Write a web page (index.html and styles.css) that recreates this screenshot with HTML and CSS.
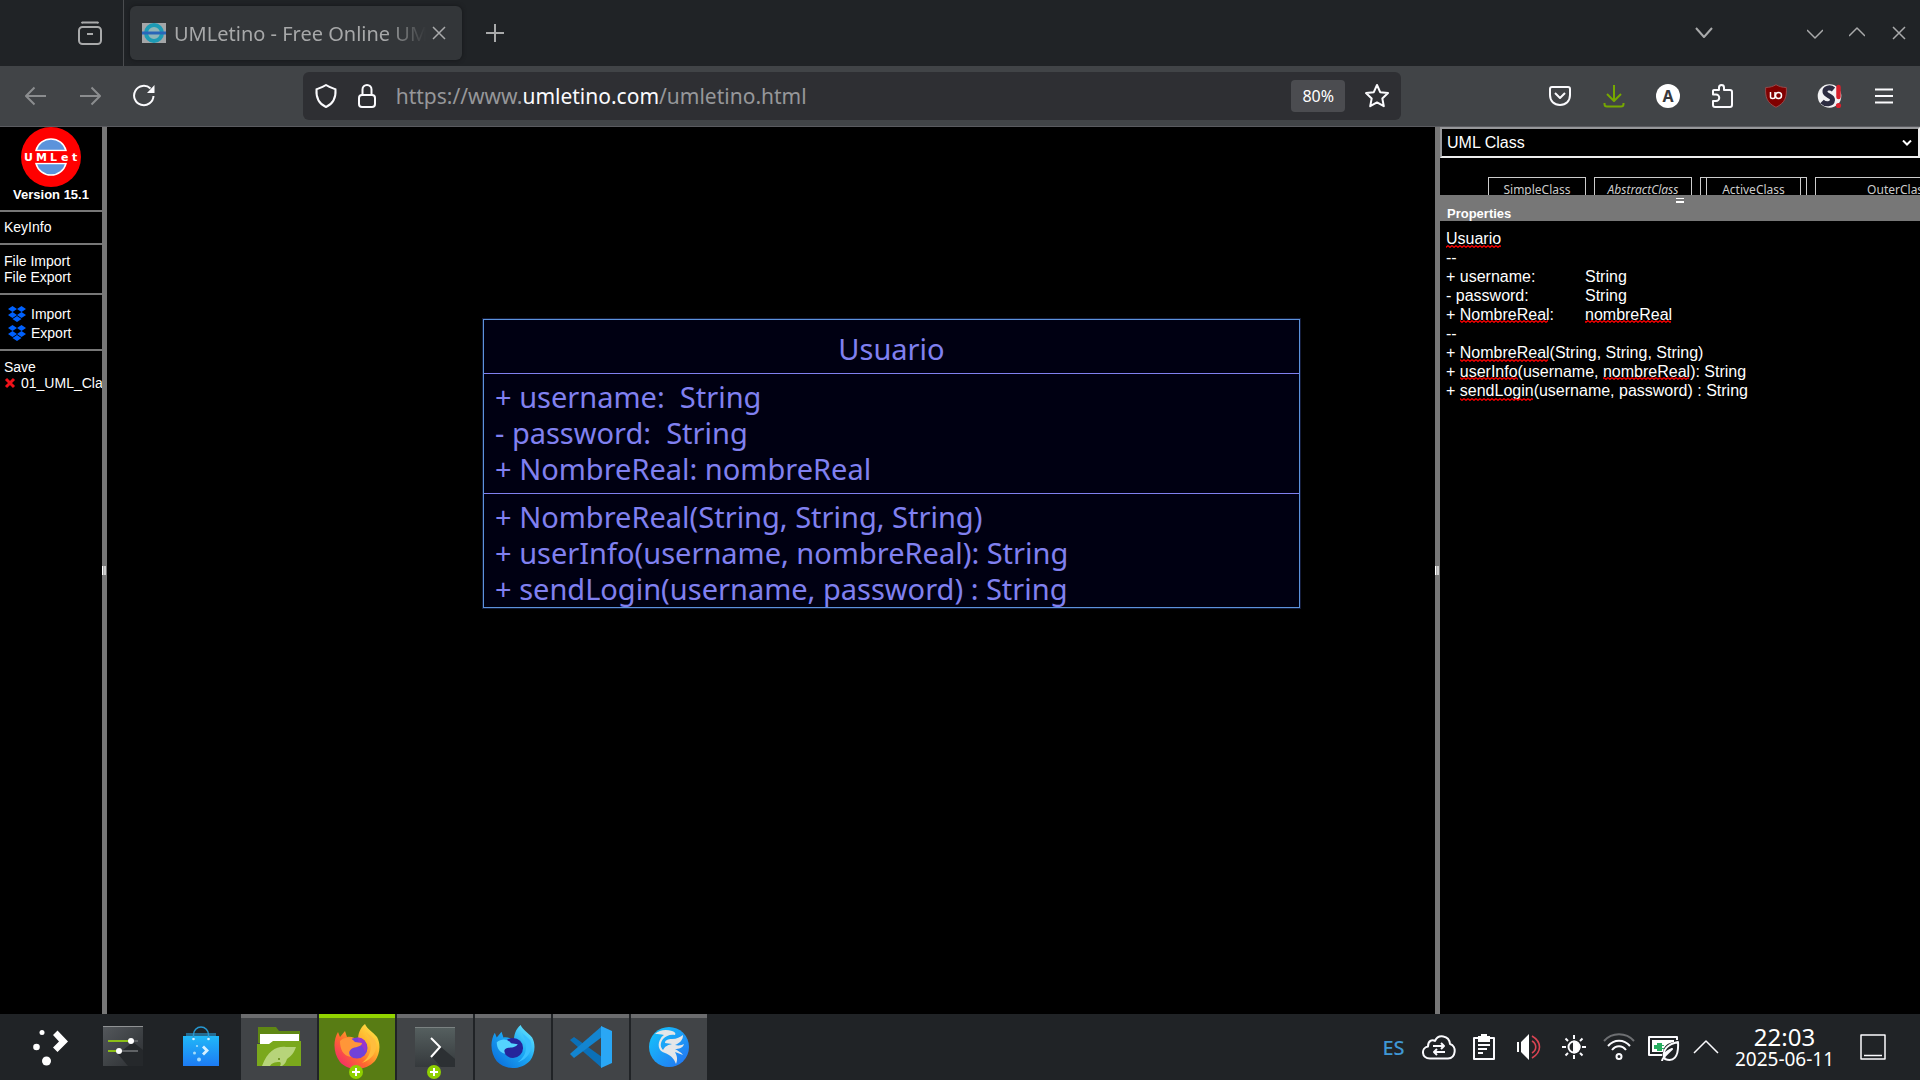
FILE: index.html
```html
<!DOCTYPE html>
<html lang="es">
<head>
<meta charset="utf-8">
<title>UMLetino - Free Online UML Tool</title>
<link rel="stylesheet" href="styles.css">
</head>
<body>
<div class="desktop">
  <header class="tabbar">
    <div class="tabbar-start">
      <button class="icon-btn" aria-label="Firefox View"><svg width="24" height="24" viewBox="0 0 24 24" class="line dim"><path d="M4 1.5h16M3.5 2.2l.8-.7h15.4l.8.7" /><rect x="1" y="6" width="22" height="17" rx="3.500"/><path d="M9 13h6"/></svg></button>
    </div>
    <div class="tab">
      <svg class="favicon" width="24" height="22" viewBox="0 0 24 22"><path fill="#a4a6a8" d="M0 1h24v20H0z"/><circle cx="12" cy="11" r="8" fill="#8fb5b8" stroke="#1d9bb5" stroke-width="4"/><path stroke="#2a66b8" stroke-width="3" d="M0 11h24"/></svg>
      <span class="tab-title">UMLetino - Free Online UML Tool</span>
      <button class="tab-close" aria-label="Close tab"><svg width="14" height="14" viewBox="0 0 14 14" class="line dim thin"><path d="M1 1l12 12M13 1L1 13"/></svg></button>
    </div>
    <button class="icon-btn" aria-label="New tab"><svg width="18" height="18" viewBox="0 0 18 18" class="line dim"><path d="M9 0v18M0 9h18"/></svg></button>
    <div class="grow"></div>
    <button class="icon-btn list-tabs" aria-label="List all tabs"><svg width="18" height="12" viewBox="0 0 18 12" class="line dim"><path d="M1 1l8 9 8-9"/></svg></button>
    <div class="window-controls">
      <button aria-label="Minimize"><svg width="16" height="16" viewBox="0 0 16 16" class="line dim thin"><path d="M0 5l8 8 8-8"/></svg></button>
      <button aria-label="Maximize"><svg width="16" height="16" viewBox="0 0 16 16" class="line dim thin"><path d="M0 11l8-8 8 8"/></svg></button>
      <button aria-label="Close"><svg width="14" height="14" viewBox="0 0 14 14" class="line dim thin"><path d="M1 1l12 12M13 1L1 13"/></svg></button>
    </div>
  </header>

  <nav class="toolbar">
    <button class="icon-btn" aria-label="Back"><svg width="22" height="20" viewBox="0 0 22 20" class="line faint"><path d="M21 10H1M9.500 1.500L1 10l8.500 8.500"/></svg></button>
    <button class="icon-btn" aria-label="Forward"><svg width="22" height="20" viewBox="0 0 22 20" class="line faint"><path d="M1 10h20M12.500 1.500L21 10l-8.500 8.500"/></svg></button>
    <button class="icon-btn" aria-label="Reload"><svg width="24" height="24" viewBox="0 0 24 24" class="line"><path d="M21.500 12a9.700 9.700 0 1 1-3-7.500"/><path fill="#fbfbfe" stroke="none" d="M22.500 1v8h-7.500z"/></svg></button>
    <div class="spacer"></div>
    <div class="urlbar">
      <svg width="24" height="26" viewBox="0 0 24 26" class="line"><path d="M12 2c3 2 6 3 9.500 4.300C22 14 20 20.500 12 24 4 20.500 2 14 2.500 6.300 6 5 9 4 12 2z"/></svg>
      <svg width="20" height="26" viewBox="0 0 20 26" class="line"><rect x="2" y="12" width="16" height="12" rx="3"/><path d="M5.500 12V6.500a4.500 4.500 0 0 1 9 0V12"/></svg>
      <a class="url" href="#url">https://www.<b>umletino.com</b>/umletino.html</a>
      <button class="zoom">80%</button>
      <button class="star" aria-label="Bookmark"><svg width="26" height="26" viewBox="0 0 26 26" class="line"><path d="M13 2l3.200 7.200 7.800.9-5.700 5.300 1.500 7.800L13 19.400l-6.800 3.800 1.500-7.800L2 10.100l7.800-.9z"/></svg></button>
    </div>
    <div class="spacer"></div>
    <button class="icon-btn" aria-label="Pocket"><svg width="24" height="24" viewBox="0 0 24 24" class="line"><path d="M4 3h16c1.400 0 2 .8 2 2v6c0 6-4 10-10 10S2 17 2 11V5c0-1.200.6-2 2-2z"/><path d="M7 9l5 5 5-5"/></svg></button>
    <button class="icon-btn" aria-label="Downloads"><svg width="22" height="24" viewBox="0 0 22 24" class="line green"><path d="M11 1v15M4 10l7 7 7-7M1.500 19v1c0 1.500 1 2.500 2.500 2.500h14c1.500 0 2.500-1 2.500-2.500v-1"/></svg></button>
    <button class="icon-btn" aria-label="Account"><span class="avatar">A</span></button>
    <button class="icon-btn" aria-label="Extensions"><svg width="24" height="26" viewBox="0 0 24 26" class="line"><path d="M4 7h5V4.500a2.500 2.500 0 0 1 5 0V7h6c1 0 2 1 2 2v13c0 1-1 2-2 2H5c-1.500 0-2-1-2-2v-4h3a2.500 2.500 0 0 0 0-6.500H3V8c0-.6.400-1 1-1z"/></svg></button>
    <button class="icon-btn" aria-label="uBlock Origin"><svg width="22" height="24" viewBox="0 0 22 24"><path fill="#800000" stroke="#96494b" d="M11 .7C14 2.500 17 3.400 21.300 3.500 22 13 20 19 11 23.300 2 19 0 13 .7 3.500 5 3.400 8 2.500 11 .7z"/><path fill="none" stroke="#fff" stroke-width="1.500" d="M5.500 8v5c0 2 4.500 2 4.500 0V8"/><circle cx="13.500" cy="11.500" r="3" fill="none" stroke="#fff" stroke-width="1.500"/></svg></button>
    <button class="icon-btn" aria-label="Script blocker"><svg width="26" height="26" viewBox="0 0 26 26"><circle cx="12.500" cy="13" r="11.800" fill="#f3f3f5"/><path fill="none" stroke="#2d2d42" stroke-width="5" d="M16.500 6.500C13 3.500 7.500 5 8 9c.5 4 8 3.500 7.500 8-.5 4.500-7 5-10.500 1.500"/><path stroke="#d8202c" stroke-width="4.500" stroke-linecap="round" d="M21.500 4v10"/><circle cx="21.500" cy="22.500" r="2.600" fill="#d8202c"/></svg></button>
    <button class="icon-btn" aria-label="Menu"><svg width="18" height="16" viewBox="0 0 18 16" class="line"><path d="M0 1.500h18M0 8h18M0 14.500h18"/></svg></button>
  </nav>

  <main class="app">
    <aside class="menu">
      <div class="brand">
        <svg width="60" height="60" viewBox="0 0 60 60"><circle cx="30" cy="30" r="30" fill="#f00"/><path fill="#5b93db" stroke="#fff" stroke-width="1.500" d="M15 23.500a15.500 15.500 0 0 1 30 0zM15 36.500a15.500 15.500 0 0 0 30 0z"/><path fill="#f00" d="M2 24.500h56v11H2z"/><text class="logo-text" x="3 15 29 40 51" y="34">UMLet</text></svg>
        <strong>Version 15.1</strong>
      </div>
      <div class="group key"><a href="#keyinfo">KeyInfo</a></div>
      <div class="group file"><a href="#file-import">File Import</a><a href="#file-export">File Export</a></div>
      <div class="group dropbox">
        <a href="#import"><svg width="18" height="16" viewBox="0 0 18 16"><path fill="#0061fe" d="M4.500 0L9 3 4.500 6 0 3zM13.500 0L18 3l-4.500 3L9 3zM4.500 6L9 9l-4.500 3L0 9zM13.500 6L18 9l-4.500 3L9 9zM9 10l4.500 3L9 16l-4.500-3z"/></svg>Import</a>
        <a href="#export"><svg width="18" height="16" viewBox="0 0 18 16"><path fill="#0061fe" d="M4.500 0L9 3 4.500 6 0 3zM13.500 0L18 3l-4.500 3L9 3zM4.500 6L9 9l-4.500 3L0 9zM13.500 6L18 9l-4.500 3L9 9zM9 10l4.500 3L9 16l-4.500-3z"/></svg>Export</a>
      </div>
      <div class="group saved"><a href="#save">Save</a><a class="saved-file" href="#01"><svg width="12" height="12" viewBox="0 0 12 12"><path stroke="#f0121a" stroke-width="3" d="M2 2l8 8M10 2l-8 8"/></svg>01_UML_Class</a></div>
    </aside>
    <div class="splitter"><i></i></div>
    <section class="canvas">
      <div class="uml-class">
        <div class="uml-name">Usuario</div>
        <div class="uml-part attrs">+ username:  String
- password:  String
+ NombreReal: nombreReal</div>
        <div class="uml-part">+ NombreReal(String, String, String)
+ userInfo(username, nombreReal): String
+ sendLogin(username, password) : String</div>
      </div>
    </section>
    <div class="splitter"><i></i></div>
    <aside class="side">
      <div class="select-wrap">
        <select aria-label="Palette"><option>UML Class</option></select>
        <svg class="select-arrow" width="10" height="6" viewBox="0 0 10 6"><path fill="none" stroke="#fff" stroke-width="2" d="M1 0.500l4 4 4-4"/></svg>
      </div>
      <div class="palette">
        <div class="mini">SimpleClass</div>
        <div class="mini"><em>AbstractClass</em></div>
        <div class="mini active"><span>ActiveClass</span></div>
        <div class="mini outer">OuterClass</div>
      </div>
      <div class="properties-head"><i></i><label for="props">Properties</label></div>
      <div class="editor">
        <textarea id="props" spellcheck="false">Usuario
--
+ username:	String
- password:	String
+ NombreReal:	nombreReal
--
+ NombreReal(String, String, String)
+ userInfo(username, nombreReal): String
+ sendLogin(username, password) : String</textarea>
        <svg class="spelling" width="300" height="190" viewBox="0 0 300 190" aria-hidden="true">
          <defs><pattern id="wave" width="4" height="3" patternUnits="userSpaceOnUse"><path fill="none" stroke="#f00" stroke-width="1.300" d="M-1 .2L0 .7l2 1.600 2-1.600 1 .8"/></pattern></defs>
          <g fill="url(#wave)"><path d="M6 24h55v3H6z"/><path d="M20 99h88v3H20zM145 99h86v3h-86z"/><path d="M20 138h88v3H20z"/><path d="M20 156h58v3H20zM163 156h86v3h-86z"/><path d="M20 177h73v3H20z"/></g>
        </svg>
      </div>
    </aside>
  </main>

  <footer class="taskbar">
    <button class="launcher start" aria-label="Applications"><svg width="40" height="40" viewBox="0 0 40 40" fill="#fff"><circle cx="12" cy="6.500" r="2.500"/><circle cx="6.500" cy="21" r="3.300"/><circle cx="16.500" cy="35" r="4.500"/><path d="M23 9l4.500-4.500L38 15.500 27.500 26 23 21.500l6-6z"/></svg></button>
    <button class="launcher" aria-label="System settings"><svg width="40" height="40" viewBox="0 0 40 40"><defs><linearGradient id="dark" x2="1" y2="1"><stop stop-color="#54585c"/><stop offset="1" stop-color="#2b2e31"/></linearGradient></defs><path fill="url(#dark)" d="M0 0h40v40H0z"/><path fill="#25282b" d="M30 16l10 8v16H25L15 28z"/><path stroke="#909294" d="M0 .5h40"/><path stroke="#606366" stroke-width="2" d="M28 15h7M16 25h19"/><path stroke="#8bbf17" stroke-width="2" d="M5 15h23M5 25h11"/><circle cx="28" cy="15" r="3" fill="#fff"/><circle cx="16" cy="25" r="3" fill="#fff"/></svg></button>
    <button class="launcher" aria-label="Discover"><svg width="40" height="42" viewBox="0 0 40 42"><defs><linearGradient id="bag" x2="0" y2="1"><stop stop-color="#20b8f8"/><stop offset="1" stop-color="#1d7bf3"/></linearGradient></defs><path fill="#246b91" d="M5 8h30v4H5z"/><path fill="url(#bag)" d="M2 11h36v30H2z"/><path fill="none" stroke="#2698d1" stroke-width="1.500" d="M12.500 14V9.500a7.500 7.500 0 0 1 15 0V14"/><g fill="#d6f0ff"><circle cx="12.500" cy="14" r="1.300"/><circle cx="27.500" cy="14" r="1.300"/><g fill="#a5dcfb"><circle cx="16" cy="21" r="1.100"/><circle cx="13.500" cy="28" r="1.500"/><circle cx="18" cy="34.500" r="2"/></g><path d="M21 22.500l2-2 5 5-5 5-2-2 3-3z"/></g></svg></button>
    <div class="tasks">
      <button class="task" aria-label="Dolphin"><svg width="44" height="42" viewBox="0 0 44 42"><path fill="#5f8713" d="M1 1h18l3 4h21v12H1z"/><path fill="#fff" d="M3 8h39v14H3z"/><path fill="#7aa81c" d="M0 18h12l4-3h28v25H0z"/><path fill="#b7d47a" d="M5 40C11 24 20 20 29 21l10 0c-2 6-5 9-9 12-1 3-2 5-5 7h-2c1-2 1-3 0-4-6 0-8 1-10 4z"/><circle cx="22" cy="33" r="1" fill="#5f8713"/></svg></button>
      <button class="task current" aria-label="Firefox"><svg width="46" height="46" viewBox="0 0 46 46"><defs><linearGradient id="fox" x1="1" x2="0" y2="1"><stop stop-color="#fff44f"/><stop offset=".35" stop-color="#ffb42e"/><stop offset=".6" stop-color="#ff6a2e"/><stop offset="1" stop-color="#f0157f"/></linearGradient></defs><path fill="url(#fox)" d="M31 0c2 5 8 8 12 13 4 7 3 17-2 24-9 10-26 11-35 1C-1 29-1 16 4 8l2 5 5-6 2 6c4-1 8 1 11 3 0-6 2-12 7-16z"/><circle cx="23" cy="24" r="10.500" fill="#7142d8"/><path fill="#9a35ce" d="M23 13.500c8-1 12 8 8 15-1-6-6-8-8-15z"/><path fill="#ff9638" d="M6 17c5-5 11-4 15 1l7 1c0 3-5 4-9 5-4 2-5 5-2 9-8-1-11-8-11-16z"/><path fill="#ffbd3d" d="M32 8c6 10 8 22-4 31 10-3 17-13 13-23-2-3-6-5-9-8z"/></svg><span class="plus"></span></button>
      <button class="task" aria-label="Konsole"><svg width="40" height="40" viewBox="0 0 40 40"><defs><linearGradient id="term" x2="0" y2="1"><stop stop-color="#566060"/><stop offset="1" stop-color="#35393c"/></linearGradient></defs><path fill="url(#term)" d="M0 0h40v40H0z"/><path fill="#2c3033" d="M26 20l14 12v8H26L17 30z"/><path stroke="#7b8282" d="M0 .5h40"/><path fill="none" stroke="#fff" stroke-width="2" d="M16 11l9 9-9 10"/></svg><span class="plus"></span></button>
      <button class="task" aria-label="Firefox Developer Edition"><svg width="44" height="46" viewBox="0 0 46 46"><defs><linearGradient id="dev" x1="1" x2="0" y2="1"><stop stop-color="#79f5ff"/><stop offset=".45" stop-color="#1ba8f4"/><stop offset="1" stop-color="#0865d8"/></linearGradient></defs><path fill="url(#dev)" d="M31 0c2 5 8 8 12 13 4 7 3 17-2 24-9 10-26 11-35 1C-1 29-1 16 4 8l2 5 5-6 2 6c4-1 8 1 11 3 0-6 2-12 7-16z"/><circle cx="23" cy="24" r="10.500" fill="#25249b"/><path fill="#55d3ff" d="M6 18c5-4 11-4 15 1l7 1c-3 4-7 3-11 4-3 1-4 3-2 6-6-1-9-6-9-12z"/><path fill="#38bfff" d="M32 8c6 10 8 22-4 31 10-3 17-13 13-23-2-3-6-5-9-8z"/></svg></button>
      <button class="task" aria-label="Visual Studio Code"><svg width="42" height="42" viewBox="0 0 42 42"><path fill="#0b70b8" d="M0 14l4-3 28 20v11L1 15z"/><path fill="#1385d0" d="M0 28l4 4L32 11V0L1 27z"/><path fill="#2aa7f5" d="M31 0l11 5v32l-11 5z"/></svg></button>
      <button class="task" aria-label="Falkon"><svg width="40" height="40" viewBox="0 0 40 40"><defs><linearGradient id="falkon" x2="1" y2="1"><stop stop-color="#14c8fb"/><stop offset="1" stop-color="#2470f2"/></linearGradient></defs><circle cx="20" cy="20" r="20" fill="url(#falkon)"/><path fill="#e4e6e8" d="M6 7c4-4 11-5 17-3 3 1 4 2 3 4-5-1-9 1-12 4-3 4-3 8 0 11 2-4 5-5 9-6l-7-1c0-3 3-4 7-4 5 0 8-2 11-4 0 5-3 8-8 10 4 1 7 0 9-1-1 4-5 5-9 5 3 2 6 3 8 6l-8-3c2 4 3 7 1 12-2-6-6-9-11-11C9 24 8 17 12 11c1-2 2-2 3-3-3-1-6-1-9-1z"/></svg></button>
    </div>
    <div class="grow"></div>
    <div class="tray">
      <button class="lang">ES</button>
      <button aria-label="Cloud sync"><svg width="34" height="26" viewBox="0 0 34 26" class="line"><path d="M8 24.500c-9 0-9-11-2-12C6 7 10 5 13 7c3-7 14-6 15 3 7 2 6 14-2 14.500z"/><path d="M11 12h11M19 9l3 3-3 3M23 18H12M15 15l-3 3 3 3"/></svg></button>
      <button aria-label="Clipboard"><svg width="22" height="26" viewBox="0 0 22 26" class="line"><path d="M1 4h20v21H1z"/><path fill="#fff" stroke="none" d="M5 2h3V0h6v2h3v6H5z"/><path d="M5 11h12M5 15h9M5 19h5"/></svg></button>
      <button aria-label="Volume"><svg width="26" height="26" viewBox="0 0 26 26"><path fill="#fff" d="M1 8h2v10H1zM5 8l8-8v26l-8-8z"/><path fill="none" stroke="#da4453" stroke-width="1.600" d="M16 2c10 6 10 16 0 22M16 7c5 3 5 9 0 12"/></svg></button>
      <button aria-label="Brightness"><svg width="26" height="26" viewBox="0 0 26 26" class="line"><circle cx="13" cy="13" r="5.500"/><path fill="#fff" d="M13 7.500a5.500 5.500 0 0 1 0 11z"/><path d="M13 1v4M13 21v4M1 13h4M21 13h4M4.500 4.500l2.500 2.500M19 19l2.500 2.500M4.500 21.500L7 19M19 7l2.500-2.500"/></svg></button>
      <button aria-label="Network"><svg width="32" height="28" viewBox="0 0 32 28" class="line"><path class="weak" d="M1 8c8-9 22-9 30 0"/><path d="M5 13c6-7 16-7 22 0M9 17c4-5 10-5 14 0"/><circle cx="16" cy="23.500" r="2.500"/></svg></button>
      <button aria-label="Battery"><svg width="32" height="28" viewBox="0 0 32 28" class="line"><path d="M14 22H1V4h28v3"/><path fill="#fff" stroke="none" d="M4 7h22v2c-7 1-10 4-11 10H4z"/><path fill="#27ae60" stroke="none" d="M6 12h3v-2h5v2h2v1h-2v2h2v1h-2v2H9v-2H6z"/><path d="M14 28c0-3 4-6 10-12-7 3-9 6-7 10 8 3 14-1 13-17-10 2-16 8-14 15"/></svg></button>
      <button class="expand" aria-label="Show hidden icons"><svg width="26" height="14" viewBox="0 0 26 14" class="line thin"><path d="M1 13L13 1l12 12"/></svg></button>
      <time class="clock" datetime="2025-06-11T22:03"><span>22:03</span><small>2025-06-11</small></time>
      <button class="show-desktop" aria-label="Show desktop"><svg width="26" height="26" viewBox="0 0 26 26" class="line thin"><path d="M1 1h24v24H1zM4 21.500h18"/></svg></button>
    </div>
  </footer>
</div>
</body>
</html>
```
FILE: styles.css
```css
* { box-sizing: border-box; }

body {
  margin: 0;
  background: #000;
  color: #fff;
  font-family: "Noto Sans", sans-serif;
}

button {
  padding: 0;
  border: 0;
  background: none;
  color: inherit;
  font: inherit;
}

a { color: inherit; text-decoration: none; }
svg { display: block; flex: none; }

.line {
  fill: none;
  stroke: #fbfbfe;
  stroke-width: 2;
  stroke-linejoin: round;
}
.line.dim { stroke: #a9aaab; }
.line.faint { stroke: #8b8d8f; }
.line.thin { stroke-width: 1.5; }
.line.green { stroke: #76a800; }
.weak { stroke: #6d6f72; }
.grow { flex: 1; }

.desktop {
  display: flex;
  flex-direction: column;
  height: 100vh;
}

/* Browser chrome */
.tabbar {
  display: flex;
  flex: none;
  align-items: stretch;
  height: 66px;
  background: #202326;
}

.tabbar-start {
  display: flex;
  width: 124px;
  padding-left: 63px;
  border-right: 1px solid #4a4c4f;
}

.icon-btn {
  display: flex;
  flex: none;
  align-items: center;
  justify-content: center;
  width: 54px;
}

.tab {
  display: flex;
  align-items: center;
  width: 332px;
  margin: 6px;
  padding: 0 16px 0 12px;
  border-radius: 6px;
  background: #333639;
  box-shadow: 0 0 4px #151719;
  color: #a7a8a9;
  font-size: 20px;
}

.tab-title {
  flex: 1;
  min-width: 0;
  margin-left: 8px;
  overflow: hidden;
  white-space: nowrap;
  mask-image: linear-gradient(to left, transparent, #000 40px);
}

.tab-close { margin-left: 6px; }
.list-tabs { margin-right: 63px; }

.window-controls { display: flex; }
.window-controls button {
  display: flex;
  align-items: center;
  justify-content: center;
  width: 42px;
}

.toolbar {
  display: flex;
  flex: none;
  height: 61px;
  padding: 0 9px;
  border-bottom: 1px solid #5a5b60;
  background: #414447;
}

.spacer { flex: 134 0 0; }

.urlbar {
  display: flex;
  flex: 1095 0 0;
  align-items: center;
  gap: 19px;
  min-width: 0;
  margin: 6px 0;
  padding: 0 11px;
  border-radius: 6px;
  background: #2e2f33;
  font-size: 21px;
}

.url { flex: 1; color: #96979a; }
.url b { color: #fbfbfe; font-weight: 400; }

.zoom {
  width: 54px;
  height: 32px;
  border-radius: 4px;
  background: #4b4c50;
  font-size: 16px;
}

.avatar {
  width: 24px;
  height: 24px;
  border-radius: 50%;
  background: #fff;
  color: #38393c;
  font-size: 16px;
  font-weight: 700;
  line-height: 24px;
}

/* UMLetino */
.app {
  display: flex;
  flex: 1;
  min-height: 0;
  font-family: "Liberation Sans", Arial, sans-serif;
}

.menu {
  width: 102px;
  overflow: hidden;
  font-size: 14px;
  line-height: 16px;
  white-space: nowrap;
}

.brand {
  display: flex;
  flex-direction: column;
  align-items: center;
  height: 83px;
  font-size: 13px;
}

.logo-text {
  fill: #fff;
  font-family: "DejaVu Sans", sans-serif;
  font-size: 11px;
  font-weight: 700;
}

.group {
  display: flex;
  flex-direction: column;
  padding-left: 4px;
  border-top: 2px solid #777;
}
.key { padding-top: 7px; height: 33px; }
.file { padding-top: 8px; height: 50px; }
.dropbox { gap: 3px; padding-top: 11px; height: 56px; }
.saved { padding-top: 8px; }

.dropbox a {
  display: flex;
  gap: 5px;
  padding-left: 4px;
}
.saved-file { display: flex; align-items: center; gap: 5px; }

.splitter {
  display: flex;
  flex: none;
  align-items: center;
  width: 5px;
  background: #777;
}
.splitter i {
  width: 5px;
  height: 9px;
  background: linear-gradient(to right, #fff 1px, #aaa 1px 2px, #ccc 2px 4px, #777 4px);
}

.canvas {
  position: relative;
  flex: 1;
  min-width: 0;
  overflow: hidden;
}

/* A diagram node, placed freely on the canvas */
.uml-class {
  position: absolute;
  top: 192px;
  left: 376px;
  width: 817px;
  border: 1px solid #5c92dc;
  background: #000012;
  box-shadow: 0 0 0 1px #121a38;
  color: #8080f0;
  font-family: "Noto Sans", sans-serif;
  font-size: 29px;
  line-height: 36px;
}
.uml-name {
  padding: 11px 0 6px;
  text-align: center;
}
.uml-part {
  padding: 5px 11px 0;
  border-top: 1px solid #8080f0;
  white-space: pre;
}
.uml-part.attrs { padding-bottom: 6px; }

.side {
  display: flex;
  flex: none;
  flex-direction: column;
  width: 25%;
}

.select-wrap { position: relative; }

.select-wrap select {
  display: block;
  width: 100%;
  height: 31px;
  padding: 0 5px;
  appearance: none;
  border: 2px solid;
  border-color: #96979a #eee #eee #96979a;
  border-radius: 0;
  background: #000;
  color: #fff;
  font: 16px "Liberation Sans", Arial, sans-serif;
}
.select-arrow {
  position: absolute;
  top: 13px;
  right: 8px;
}

.palette {
  display: flex;
  gap: 8px;
  height: 37px;
  padding: 19px 0 0 48px;
  overflow: hidden;
  color: #ccc;
  font-family: "Noto Sans", sans-serif;
  font-size: 12px;
  line-height: 24px;
  text-align: center;
}
.mini {
  flex: none;
  width: 98px;
  height: 40px;
  border: 1px solid #ccc;
}
.mini.active { width: 107px; padding: 0 5px; }
.active span { display: block; height: 40px; border: solid #ccc; border-width: 0 1px; }
.mini.outer { width: 166px; }

.properties-head {
  display: flex;
  flex: none;
  flex-direction: column;
  height: 26px;
  padding: 3px 7px 0;
  background: #777;
  font-size: 13px;
  font-weight: 700;
  line-height: 15px;
}
.properties-head i {
  flex: none;
  align-self: center;
  width: 8px;
  height: 5px;
  border: solid #fff;
  border-width: 1px 0 2px;
}
.properties-head label { margin-top: 3px; }

.editor { position: relative; flex: 1; min-height: 0; }

.editor textarea {
  display: block;
  width: 100%;
  height: 100%;
  padding: 8px 6px;
  border: 0;
  outline: 0;
  resize: none;
  background: #000;
  color: #fff;
  font: 16px/19px "Liberation Sans", Arial, sans-serif;
  tab-size: 139px;
}
.spelling {
  position: absolute;
  top: 0;
  left: 0;
  pointer-events: none;
}

/* Desktop panel */
.taskbar {
  display: flex;
  flex: none;
  align-items: stretch;
  height: 66px;
  padding-left: 16px;
  background: #202326;
}

.launcher {
  display: flex;
  align-items: center;
  justify-content: center;
  width: 78px;
  padding-bottom: 2px;
}
.launcher.start { width: 68px; }

.tasks { display: flex; gap: 2px; margin-left: 1px; }

.task {
  position: relative;
  display: flex;
  align-items: center;
  justify-content: center;
  width: 76px;
  padding-bottom: 4px;
  border-top: 4px solid #6b6c6e;
  background: #414447;
}
.task.current { border-color: #92d400; background: #587c14; }

/* "New window" badge on a grouped task */
.plus {
  position: absolute;
  bottom: 1px;
  left: 30px;
  width: 14px;
  height: 14px;
  border-radius: 50%;
  background:
    linear-gradient(#fff, #fff) center / 8px 2px no-repeat,
    linear-gradient(#fff, #fff) center / 2px 8px no-repeat,
    #8fd000;
}

.tray {
  display: flex;
  align-items: center;
  padding-right: 17px;
}
.tray button {
  display: flex;
  justify-content: center;
  width: 45px;
}
.tray .expand { width: 40px; }
.tray .show-desktop { width: 60px; }
.lang { color: #3f97d4; font-size: 20px; font-weight: 500; }

.clock {
  display: flex;
  flex-direction: column;
  align-items: center;
  width: 117px;
  font-size: 24px;
  line-height: 24px;
}
.clock small { font-size: 19px; line-height: 20px; }
```
